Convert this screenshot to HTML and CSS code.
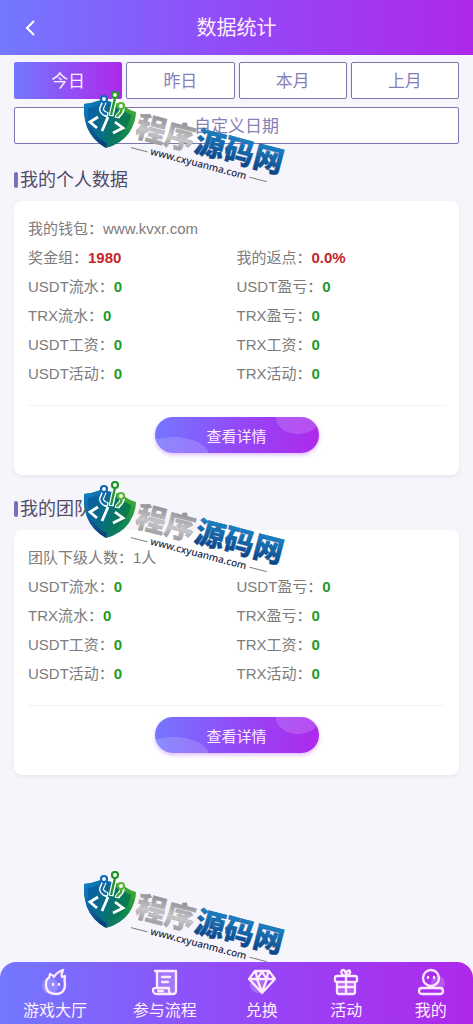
FILE: index.html
```html
<!doctype html>
<html lang="zh-CN">
  <head>
    <meta charset="UTF-8" />
    <meta name="viewport" content="width=device-width, initial-scale=1.0" />
    <title>数据统计</title>
    <link rel="stylesheet" href="styles.css">
  </head>
  <body>
    <!-- shared gradients and logo -->
    <svg class="defs" width="0" height="0" aria-hidden="true">
      <defs>
        <linearGradient id="shield-left" x1="0" y1="0" x2="0.6" y2="1">
          <stop offset="0" stop-color="#0d86c8" />
          <stop offset="1" stop-color="#0a3f7c" />
        </linearGradient>
        <linearGradient id="shield-right" x1="0.2" y1="1" x2="0.9" y2="0">
          <stop offset="0" stop-color="#0b6a78" />
          <stop offset="0.5" stop-color="#118a4e" />
          <stop offset="1" stop-color="#4cb42c" />
        </linearGradient>
        <linearGradient id="shield-core" x1="0" y1="0.3" x2="1" y2="0.6">
          <stop offset="0" stop-color="#0a5fa6" />
          <stop offset="0.45" stop-color="#08707f" />
          <stop offset="1" stop-color="#0b7f3a" />
        </linearGradient>
        <linearGradient id="silver" x1="0" y1="0" x2="0" y2="1">
          <stop offset="0.2" stop-color="#8d8d92" />
          <stop offset="0.6" stop-color="#c8c8cc" />
          <stop offset="1" stop-color="#85858a" />
        </linearGradient>
        <linearGradient id="blue" x1="0" y1="0" x2="0" y2="1">
          <stop offset="0.2" stop-color="#1a86c8" />
          <stop offset="1" stop-color="#0a3478" />
        </linearGradient>
      </defs>
      <symbol id="shield" viewBox="0 0 54 58">
        <path d="M0 13Q9 12 17 9L38 13Q44 19 52 21Q52 31 45 42Q37 53 22 57Q8 49 3 36Q-1 24 0 13Z" fill="url(#shield-right)" />
        <path d="M0 13Q9 12 17 9L28 11L22 57Q8 49 3 36Q-1 24 0 13Z" fill="url(#shield-left)" />
        <path d="M4 17Q11 16 18 13L36 17Q41 22 47 24Q46 32 40 40Q33 49 22 52Q10 45 6 34Q3 25 4 17Z" fill="url(#shield-core)" />
        <g fill="none" stroke="#fff" stroke-width="5">
          <path d="M20 10C20 16 16 16 18 20Q20 23 24 24M31 7L27 25M38 17C39 23 34 22 33 27" />
        </g>
        <g fill="none" stroke-width="2.4">
          <path d="M20 11C20 16 16 16 18 20Q20 23 23 23" stroke="#1268ae" />
          <path d="M31 7L27 24" stroke="#25942e" />
          <path d="M37 18C39 23 34 22 33 26" stroke="#41a832" />
        </g>
        <circle cx="20" cy="8" r="3" fill="#fff" stroke="#1268ae" stroke-width="2.2" />
        <circle cx="31" cy="4" r="3" fill="#fff" stroke="#25942e" stroke-width="2.2" />
        <circle cx="37" cy="15" r="3" fill="#fff" stroke="#55b335" stroke-width="2.2" />
        <path d="M14 26L6 31L13 37M24 26L18 40M31 31L39 37L29 42" fill="none" stroke="#fff" stroke-width="2.8" />
      </symbol>
    </svg>

    <header class="topbar">
      <a href="#" class="back" aria-label="返回">
        <svg width="12" height="18" viewBox="0 0 12 18"><path d="M10 2L3 9L10 16" /></svg>
      </a>
      <h1>数据统计</h1>
    </header>

    <main>
      <div class="dates">
        <button class="date active">今日</button>
        <button class="date">昨日</button>
        <button class="date">本月</button>
        <button class="date">上月</button>
        <button class="date custom">自定义日期</button>
      </div>

      <section>
        <h2>我的个人数据</h2>
        <div class="card">
          <ul class="stats">
            <li class="full">我的钱包：www.kvxr.com</li>
            <li>奖金组：<b class="red">1980</b></li>
            <li>我的返点：<b class="red">0.0%</b></li>
            <li>USDT流水：<b>0</b></li>
            <li>USDT盈亏：<b>0</b></li>
            <li>TRX流水：<b>0</b></li>
            <li>TRX盈亏：<b>0</b></li>
            <li>USDT工资：<b>0</b></li>
            <li>TRX工资：<b>0</b></li>
            <li>USDT活动：<b>0</b></li>
            <li>TRX活动：<b>0</b></li>
          </ul>
          <div class="more"><button class="detail">查看详情</button></div>
        </div>
      </section>

      <section>
        <h2>我的团队数据</h2>
        <div class="card">
          <ul class="stats">
            <li class="full">团队下级人数：1人</li>
            <li>USDT流水：<b>0</b></li>
            <li>USDT盈亏：<b>0</b></li>
            <li>TRX流水：<b>0</b></li>
            <li>TRX盈亏：<b>0</b></li>
            <li>USDT工资：<b>0</b></li>
            <li>TRX工资：<b>0</b></li>
            <li>USDT活动：<b>0</b></li>
            <li>TRX活动：<b>0</b></li>
          </ul>
          <div class="more"><button class="detail">查看详情</button></div>
        </div>
      </section>
    </main>

    <nav class="tabbar">
      <a href="#" class="wide">
        <svg width="28" height="28" viewBox="0 0 28 28">
          <circle class="glow" cx="9" cy="18" r="8" />
          <path d="M6 11Q9 10 9 6Q12 7 13 9Q16 4 22 2Q20 6 21 9L24 8Q23 11 24 16Q24 26 15 26Q5 26 5 17Q5 13 6 11Z" />
          <path d="M12 16v1M18 16v1" />
        </svg>
        游戏大厅
      </a>
      <a href="#" class="wide">
        <svg width="28" height="28" viewBox="0 0 28 28">
          <path class="glow" d="M6 3H25V25H6Z" />
          <path d="M6 19V5Q6 3 4 3H25V23Q25 26 22 26H6Q2 26 2 22Q2 20 5 20H18V23Q18 26 22 26M11 9H19M11 14H17M7 23H12" />
        </svg>
        参与流程
      </a>
      <a href="#">
        <svg width="28" height="28" viewBox="0 0 28 28">
          <circle class="glow" cx="10" cy="17" r="8" />
          <path d="M7 3H21L27 11L14 25L1 11ZM1 11H27M8 4L9 11L14 24L19 11L20 4M9 11L14 4L19 11" />
        </svg>
        兑换
      </a>
      <a href="#">
        <svg width="28" height="28" viewBox="0 0 28 28">
          <path class="glow" d="M5 13H24V25H5Z" />
          <path d="M5 8H23Q25 8 25 10V12Q25 14 23 14H5Q3 14 3 12V10Q3 8 5 8ZM5 14V24Q5 26 7 26H21Q23 26 23 24V14M14 8V26M5 19H23M14 8C9 8 8 2 11 2Q14 2 14 8C14 2 17 2 18 3Q19 6 14 8" />
        </svg>
        活动
      </a>
      <a href="#">
        <svg width="28" height="28" viewBox="0 0 28 28">
          <circle class="glow" cx="21" cy="15" r="7" />
          <circle cx="14" cy="10" r="8" />
          <path d="M11 9v1M17 9v1M5 20H23Q26 20 26 23Q26 26 23 26H5Q2 26 2 23Q2 20 5 20Z" />
        </svg>
        我的
      </a>
    </nav>

    <div class="watermark wm-1">
      <svg width="230" height="110" viewBox="0 0 230 110">
        <use href="#shield" width="54" height="58" />
        <g transform="translate(50 45) rotate(14.5)">
          <text class="wm-name wm-silver" x="0" y="0">程序</text>
          <text class="wm-name wm-blue" x="61" y="0">源码网</text>
          <text class="wm-url" x="20" y="14">www.cxyuanma.com</text>
          <path d="M0 12H17M122 11H140" stroke="#555" stroke-width="0.7" />
        </g>
      </svg>
    </div>
    <div class="watermark wm-2">
      <svg width="230" height="110" viewBox="0 0 230 110">
        <use href="#shield" width="54" height="58" />
        <g transform="translate(50 45) rotate(14.5)">
          <text class="wm-name wm-silver" x="0" y="0">程序</text>
          <text class="wm-name wm-blue" x="61" y="0">源码网</text>
          <text class="wm-url" x="20" y="14">www.cxyuanma.com</text>
          <path d="M0 12H17M122 11H140" stroke="#555" stroke-width="0.7" />
        </g>
      </svg>
    </div>
    <div class="watermark wm-3">
      <svg width="230" height="110" viewBox="0 0 230 110">
        <use href="#shield" width="54" height="58" />
        <g transform="translate(50 45) rotate(14.5)">
          <text class="wm-name wm-silver" x="0" y="0">程序</text>
          <text class="wm-name wm-blue" x="61" y="0">源码网</text>
          <text class="wm-url" x="20" y="14">www.cxyuanma.com</text>
          <path d="M0 12H17M122 11H140" stroke="#555" stroke-width="0.7" />
        </g>
      </svg>
    </div>
  </body>
</html>
```
FILE: styles.css
```css
* {
  box-sizing: border-box;
  margin: 0;
  padding: 0;
}
body {
  position: relative;
  display: flex;
  flex-direction: column;
  min-height: 100vh;
  font-family: 'Liberation Sans', 'Noto Sans CJK SC', sans-serif;
  background: #f6f5fc;
  color: #7c7c7c;
}
button {
  font: inherit;
  cursor: pointer;
}
a {
  color: inherit;
  text-decoration: none;
}
.defs {
  position: absolute;
}
.topbar {
  display: grid;
  grid-template-columns: 44px 1fr 44px;
  align-items: center;
  height: 55px;
  background: linear-gradient(90deg, #7378ff, #9349f8 50%, #ae28ec);
  color: #ffeefc;
}
.topbar h1 {
  font-size: 20px;
  font-weight: 400;
  line-height: 28px;
  text-align: center;
}
.back {
  display: flex;
  justify-content: flex-end;
  padding-right: 8px;
}
.back path {
  fill: none;
  stroke: #fff;
  stroke-width: 2;
}
main {
  flex: 1;
  padding: 7px 14px 20px;
}
.dates {
  display: grid;
  grid-template-columns: repeat(4, 1fr);
  gap: 8px 4px;
  padding-bottom: 2px;
}
.date {
  height: 37px;
  padding-bottom: 2px;
  font-size: 17px;
  color: #8680b8;
  background: #fff;
  border: 1px solid #7b76b0;
  border-radius: 2px;
}
.date.active {
  color: #ffeefc;
  background: linear-gradient(90deg, #7378ff, #ae28ec) border-box;
  border-color: transparent;
}
.custom {
  grid-column: 1 / -1;
}
h2 {
  display: flex;
  align-items: center;
  gap: 2px;
  margin: 20px 0 7px;
  font-size: 18px;
  font-weight: 400;
  line-height: 28px;
  color: #504b66;
}
h2::before {
  content: '';
  width: 4px;
  height: 16px;
  border-radius: 2px;
  background: #7b70b8;
}
.card {
  padding: 13px 14px 22px;
  background: #fff;
  border-radius: 8px;
  box-shadow: 0 2px 4px rgba(0, 0, 0, 0.06);
}
.stats {
  display: grid;
  grid-template-columns: 1fr 1fr;
  list-style: none;
  font-size: 15px;
  line-height: 29px;
}
.full {
  grid-column: 1 / -1;
}
.stats b {
  color: #1e9a28;
}
.stats .red {
  color: #c4262b;
}
.more {
  margin-top: 17px;
  padding-top: 11px;
  border-top: 1px solid #f2f2f2;
  text-align: center;
}
.detail {
  display: block;
  width: 164px;
  height: 36px;
  margin: 0 auto;
  font-size: 15px;
  color: #ffeefc;
  border: 0;
  border-radius: 18px;
  background:
    radial-gradient(ellipse 22px 16px at 143px 1px, rgba(255, 255, 255, 0.16) 98%, transparent),
    radial-gradient(ellipse 36px 18px at 18px 38px, rgba(255, 255, 255, 0.16) 98%, transparent),
    linear-gradient(100deg, #7378ff, #9349f8 50%, #ae28ec);
  box-shadow: 0 2px 4px rgba(160, 60, 245, 0.35);
}
.tabbar {
  display: flex;
  height: 62px;
  padding-top: 6px;
  border-radius: 16px 16px 0 0;
  background: linear-gradient(90deg, #7378ff, #9349f8 50%, #ae28ec);
  color: #ffeefc;
  font-size: 16px;
  line-height: 30px;
}
.tabbar a {
  flex: 10;
  display: flex;
  flex-direction: column;
  align-items: center;
}
.tabbar .wide {
  flex: 13;
}
.tabbar svg {
  flex: none;
  fill: none;
  stroke: #ffeafd;
  stroke-width: 2.3;
  stroke-linecap: round;
  stroke-linejoin: round;
}
.tabbar .glow {
  fill: rgba(255, 255, 255, 0.2);
  stroke: none;
}
.watermark {
  position: absolute;
  left: 84px;
  pointer-events: none;
}
.watermark svg {
  display: block;
}
.wm-1 {
  top: 91px;
}
.wm-2 {
  top: 481px;
}
.wm-3 {
  top: 871px;
}
.wm-name {
  font-family: 'Noto Sans CJK SC', sans-serif;
  font-size: 30px;
  font-weight: 900;
  font-style: oblique 8deg;
}
.wm-silver {
  fill: url(#silver);
  stroke: #a8a8ac;
  stroke-width: 0.4;
}
.wm-blue {
  fill: url(#blue);
  stroke: #14599c;
  stroke-width: 0.4;
}
.wm-url {
  font-family: 'Noto Sans', sans-serif;
  font-size: 10px;
  font-weight: 500;
  fill: #1c2440;
}
```
